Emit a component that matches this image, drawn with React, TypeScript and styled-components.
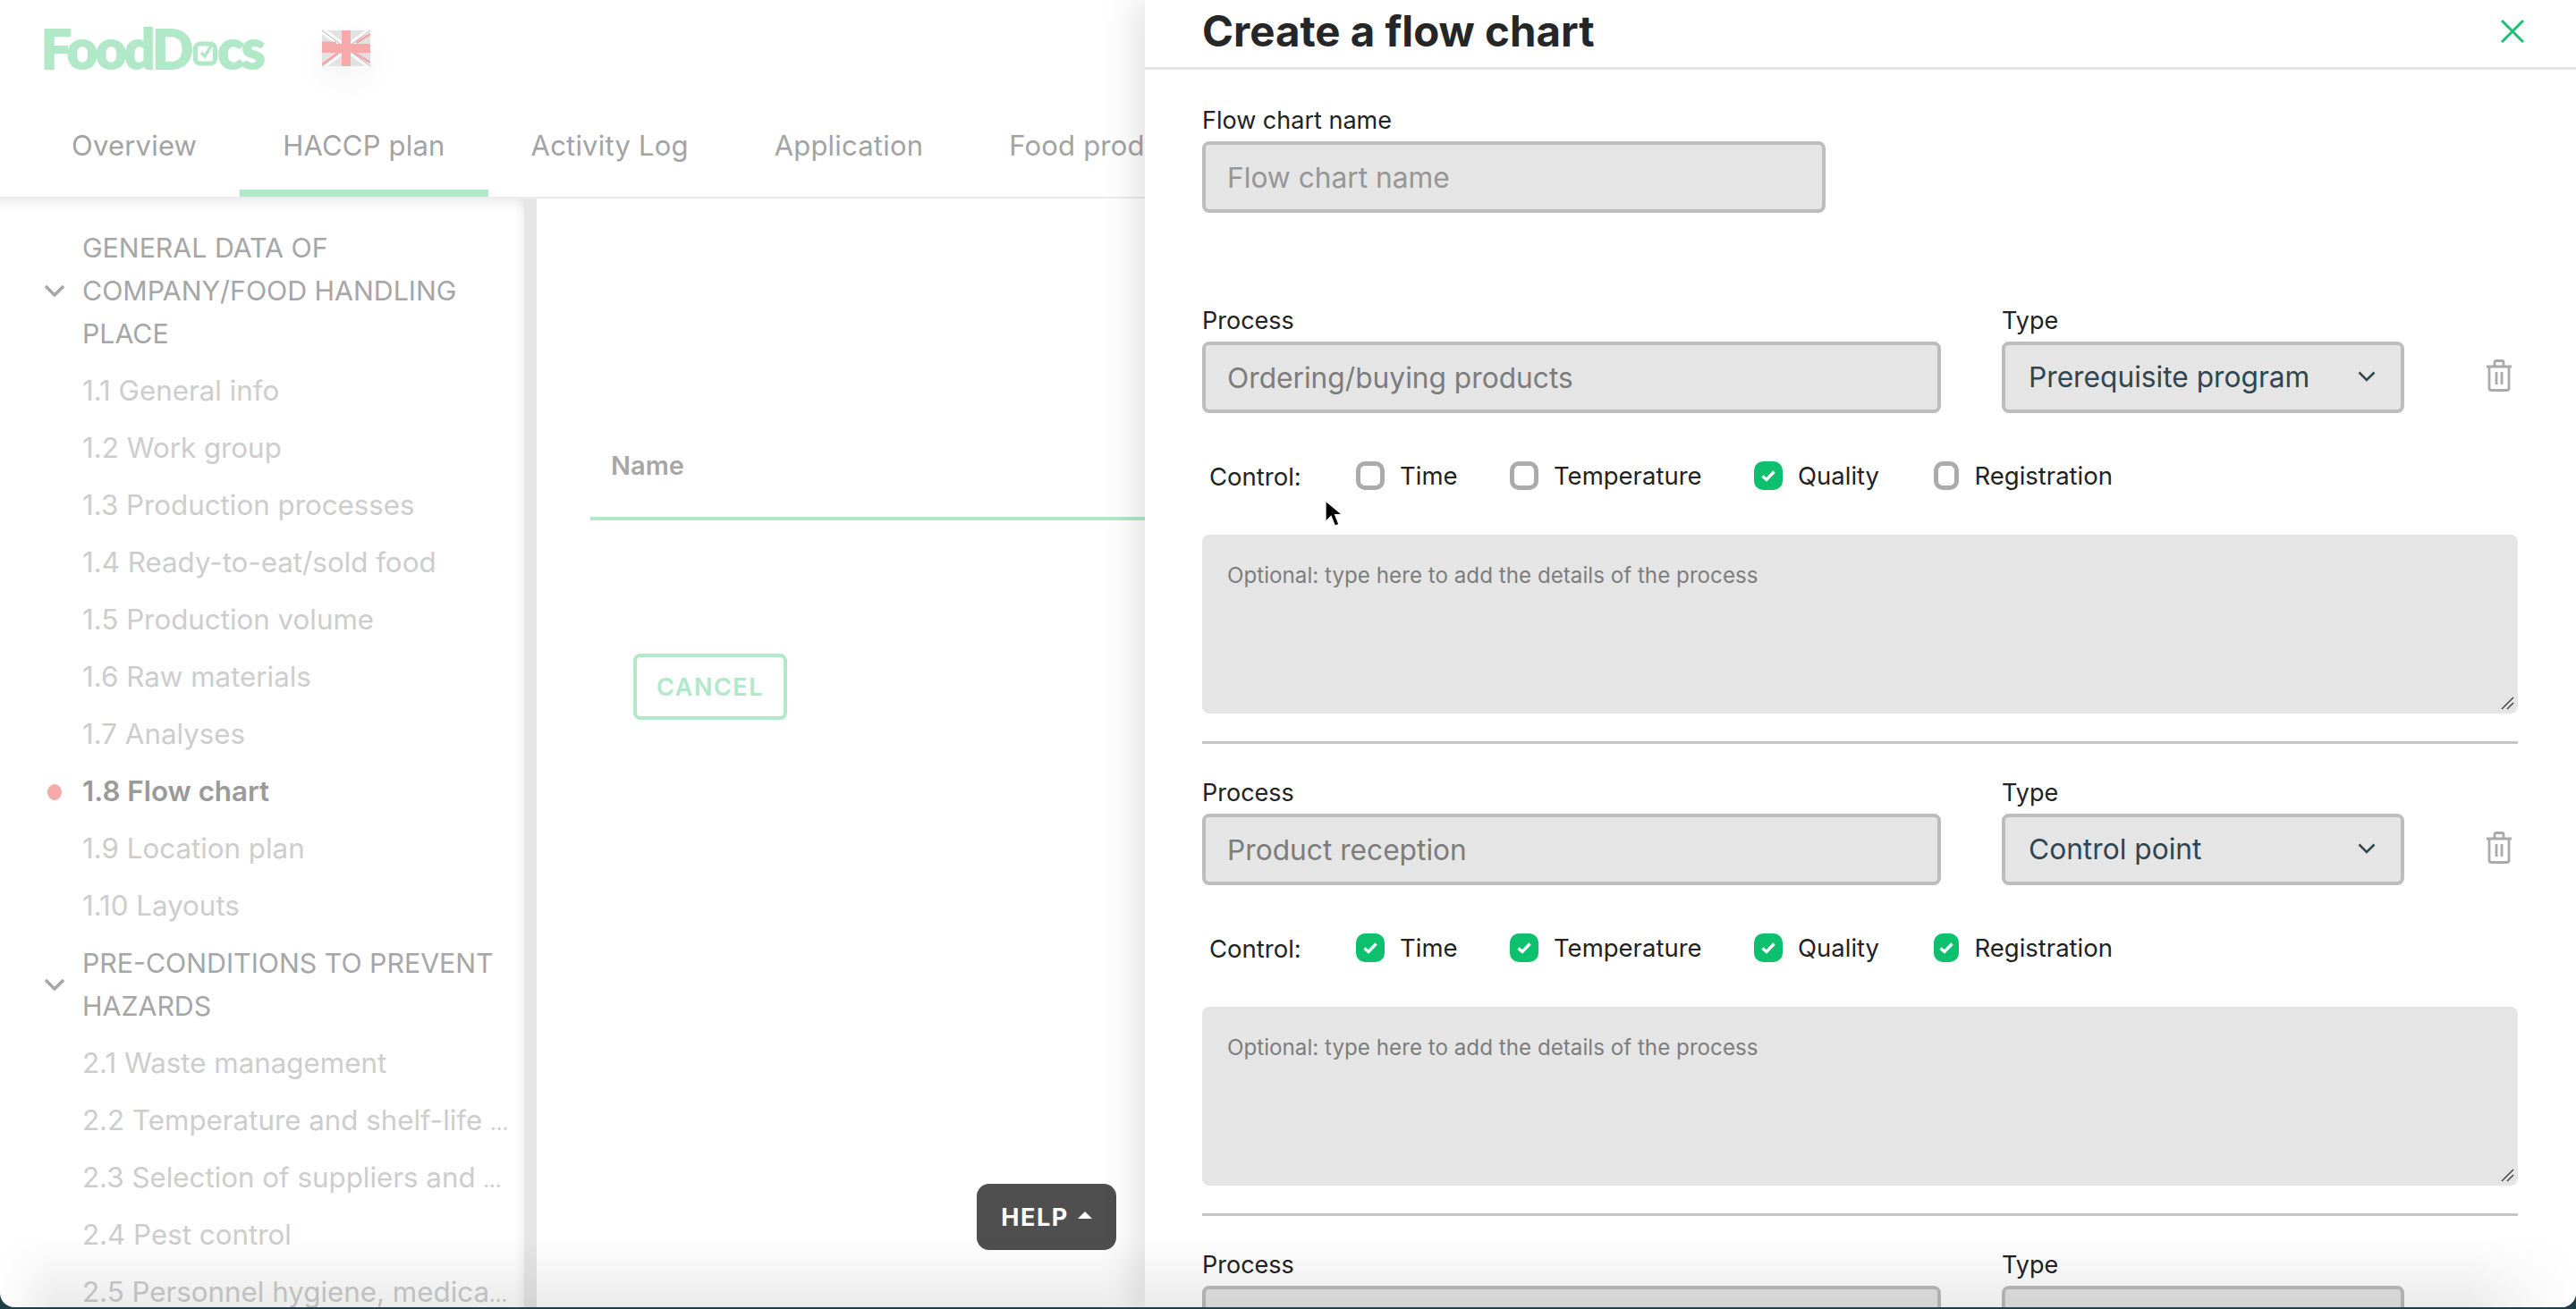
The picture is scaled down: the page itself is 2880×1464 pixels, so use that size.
import styled, { createGlobalStyle } from 'styled-components';

const GlobalStyle = createGlobalStyle`
  html, body {
    margin: 0;
    padding: 0;
    background: #1f3f48;
  }
  * {
    box-sizing: border-box;
  }
`;

const font = `Inter, "Liberation Sans", sans-serif`;

const Screen = styled.div`
  position: relative;
  display: flex;
  width: 2880px;
  height: 1462px;
  overflow: hidden;
  background: #fff;
  border-radius: 0 0 16px 16px;
  font-family: ${font};
`;

const Page = styled.div`
  position: relative;
  display: flex;
  flex-direction: column;
  width: 1280px;
  flex: none;
`;

const TopBar = styled.div`
  display: flex;
  align-items: flex-start;
  height: 118px;
  padding: 26px 0 0 46px;
`;

const Logo = styled.div`
  display: flex;
  align-items: center;
  width: 314px;
  height: 56px;
  font-family: Lato, sans-serif;
  font-weight: 900;
  font-size: 60px;
  letter-spacing: -2.5px;
  color: #b0e8c8;
  -webkit-text-stroke: 2px #b0e8c8;
`;

const LogoBox = styled.svg`
  width: 27px;
  height: 30px;
  margin: 9px 1px 0 2px;
`;

const FlagWrap = styled.div`
  display: flex;
  align-items: center;
  justify-content: center;
  width: 54px;
  height: 40px;
  margin-top: 8px;
  border-radius: 50%;
  box-shadow: 0 14px 30px 6px rgba(0, 0, 0, 0.04);
`;

const Tabs = styled.div`
  display: flex;
  height: 104px;
  padding-left: 32px;
  border-bottom: 2px solid #ececec;
  white-space: nowrap;
  overflow: hidden;
`;

const Tab = styled.div<{ $active?: boolean }>`
  display: flex;
  align-items: center;
  height: 102px;
  padding: 0 48px 6px;
  font-size: 31px;
  letter-spacing: 0.2px;
  color: #a3a3a3;
  border-bottom: 8px solid ${({ $active }) => ($active ? '#b0e8c8' : 'transparent')};
`;

const Main = styled.div`
  display: flex;
  flex: 1;
  min-height: 0;
`;

const Sidebar = styled.div`
  width: 600px;
  flex: none;
  padding-top: 23px;
  overflow: hidden;
  border-right: 14px solid #e6e6e6;
  box-shadow: inset -12px 0 12px -10px rgba(0, 0, 0, 0.08), inset 0 16px 14px -12px rgba(0, 0, 0, 0.09);
`;

const Section = styled.div`
  display: flex;
  align-items: center;
  padding: 0 24px 0 48px;
  margin: 8px 0;
  font-size: 30.3px;
  line-height: 48px;
  color: #a6a6a6;
`;

const SectionIcon = styled.svg`
  width: 26px;
  height: 16px;
  flex: none;
  margin-right: 18px;
`;

const Item = styled.div<{ $active?: boolean }>`
  position: relative;
  height: 64px;
  padding-left: 92px;
  font-size: 31.3px;
  font-weight: ${({ $active }) => ($active ? 600 : 400)};
  line-height: 64px;
  white-space: nowrap;
  color: ${({ $active }) => ($active ? '#9a9a9a' : '#cdcdcd')};
`;

// the cut-off mark of a long item is smaller than its text
const Dots = styled.span`
  font-size: 21px;
  font-weight: 600;
`;

const Dot = styled.span`
  position: absolute;
  left: 53px;
  top: 24px;
  width: 16px;
  height: 18px;
  border-radius: 50%;
  background: #f5a9a9;
`;

const Content = styled.div`
  flex: 1;
  padding: 260px 0 0 60px;
`;

const NameHead = styled.div`
  height: 100px;
  padding: 21px 0 0 23px;
  border-bottom: 4px solid #b0e8c8;
  font-size: 29px;
  font-weight: 600;
  line-height: 36px;
  color: #a6a6a6;
`;

const CancelButton = styled.button`
  display: block;
  width: 172px;
  height: 74px;
  margin: 149px 0 0 48px;
  background: #fff;
  border: 4px solid #b0e8c8;
  border-radius: 8px;
  font-family: ${font};
  font-size: 27px;
  font-weight: 600;
  letter-spacing: 1.5px;
  color: #b0e8c8;
`;

const HelpButton = styled.div`
  position: absolute;
  left: 1092px;
  bottom: 64px;
  display: flex;
  align-items: center;
  justify-content: center;
  gap: 10px;
  width: 156px;
  height: 74px;
  background: #4f4f4f;
  border-radius: 14px;
  font-size: 27px;
  font-weight: 700;
  letter-spacing: 1.5px;
  color: #fff;
`;

const Caret = styled.span`
  width: 0;
  height: 0;
  margin-bottom: 4px;
  border-left: 8px solid transparent;
  border-right: 8px solid transparent;
  border-bottom: 8px solid #fff;
`;

const Drawer = styled.div`
  position: relative;
  flex: 1;
  background: #fff;
  box-shadow: -14px 0 34px rgba(0, 0, 0, 0.1);
`;

const DrawerHead = styled.div`
  display: flex;
  align-items: center;
  justify-content: space-between;
  height: 78px;
  padding: 0 58px 6px 64px;
  border-bottom: 3px solid #e6e6e6;
`;

const Title = styled.h1`
  margin: 0;
  font-size: 47.4px;
  font-weight: 700;
  color: #262626;
`;

const DrawerBody = styled.div`
  padding: 40px 65px 0 64px;
`;

const Label = styled.div`
  height: 34px;
  margin-bottom: 6px;
  font-size: 27px;
  line-height: 34px;
  color: #222;
`;

const TextField = styled.input`
  display: block;
  height: 80px;
  width: 100%;
  padding: 0 24px;
  background: #e5e5e5;
  border: 4px solid #bdbdbd;
  border-radius: 8px;
  outline: none;
  font-family: ${font};
  font-size: 31.7px;
  color: #7c7c7c;

  &::placeholder {
    color: #969696;
    opacity: 1;
  }
`;

const NameField = styled.div`
  width: 697px;
  margin-bottom: 104px;
`;

const ProcessBlock = styled.div`
  padding-bottom: 31px;
  margin-bottom: 38px;
  border-bottom: 3px solid #c6c6c6;
`;

const ProcessRow = styled.div`
  display: grid;
  grid-template-columns: 826px 450px 1fr;
  column-gap: 68px;
`;

const SelectBox = styled.div`
  display: flex;
  align-items: center;
  justify-content: space-between;
  height: 80px;
  padding: 0 28px 2px 26px;
  background: #e5e5e5;
  border: 4px solid #bdbdbd;
  border-radius: 8px;
  font-size: 31.7px;
  color: #2f4650;
`;

const TrashIcon = styled.svg`
  width: 30px;
  height: 36px;
  margin: 60px 0 0 23px;
`;

const ControlRow = styled.div`
  display: flex;
  align-items: center;
  height: 32px;
  margin: 54px 0 50px 8px;
  font-size: 27.5px;
  color: #222;
`;

const ControlLabel = styled.span`
  width: 164px;
  padding-top: 2px;
`;

const Option = styled.span<{ $width: number }>`
  display: flex;
  align-items: center;
  gap: 17px;
  width: ${({ $width }) => $width}px;
`;

const Checkbox = styled.span<{ $checked: boolean }>`
  display: flex;
  align-items: center;
  justify-content: center;
  width: 32px;
  height: 32px;
  border-radius: 10px;
  background: ${({ $checked }) => ($checked ? '#0cc06e' : '#fff')};
  border: ${({ $checked }) => ($checked ? 'none' : '5px solid #ababab')};
`;

const NotesWrap = styled.div`
  position: relative;
  height: 200px;
`;

const Notes = styled.textarea`
  display: block;
  width: 100%;
  height: 100%;
  padding: 32px 28px;
  background: #e5e5e5;
  border: none;
  border-radius: 8px;
  outline: none;
  resize: none;
  font-family: ${font};
  font-size: 24.2px;
  line-height: 28px;

  &::placeholder {
    color: #7d7d7d;
    opacity: 1;
  }
`;

const ResizeHandle = styled.svg`
  position: absolute;
  right: 4px;
  bottom: 4px;
  width: 16px;
  height: 16px;
`;

// fade at the bottom edge of the window
const BottomShade = styled.div`
  position: absolute;
  left: 0;
  right: 0;
  bottom: 0;
  height: 80px;
  pointer-events: none;
  background: linear-gradient(to bottom, rgba(0, 0, 0, 0), rgba(0, 0, 0, 0.08));
  mask-image: linear-gradient(to right, transparent 0, #000 60px, #000 calc(100% - 120px), transparent 100%);
`;

const Pointer = styled.svg`
  position: absolute;
  left: 1476px;
  top: 557px;
  width: 26px;
  height: 36px;
`;

const general = ['1.1 General info', '1.2 Work group', '1.3 Production processes', '1.4 Ready-to-eat/sold food', '1.5 Production volume', '1.6 Raw materials', '1.7 Analyses'];
const general2 = ['1.9 Location plan', '1.10 Layouts'];
const hazards = [
  { label: '2.1 Waste management' },
  { label: '2.2 Temperature and shelf-life ', cut: true },
  { label: '2.3 Selection of suppliers and ', cut: true },
  { label: '2.4 Pest control' },
  { label: '2.5 Personnel hygiene, medica', cut: true },
];

const controls = [
  { name: 'Time', width: 172 },
  { name: 'Temperature', width: 273 },
  { name: 'Quality', width: 201 },
  { name: 'Registration', width: 200 },
];

const processes = [
  { name: 'Ordering/buying products', type: 'Prerequisite program', checked: ['Quality'] },
  { name: 'Product reception', type: 'Control point', checked: ['Time', 'Temperature', 'Quality', 'Registration'] },
];

function Chevron() {
  return (
    <SectionIcon viewBox="0 0 26 16">
      <path d="M3 3l10 10L23 3" fill="none" stroke="#a6a6a6" strokeWidth="3.5" />
    </SectionIcon>
  );
}

function UkFlag() {
  return (
    <svg width="54" height="40" viewBox="0 0 54 40">
      <rect width="54" height="40" fill="#e2e2e2" />
      <path d="M0 0l54 40M54 0L0 40" stroke="#fff" strokeWidth="7" />
      <path d="M0 0l54 40M54 0L0 40" stroke="#b0b0b0" strokeWidth="1" />
      <path d="M0 14L16 14 M54 4L38 14 M0 38L18 25 M54 36L36 25" stroke="#f5a9a9" strokeWidth="3" />
      <path d="M27 0v40M0 20h54" stroke="#f5a9a9" strokeWidth="10" />
    </svg>
  );
}

function ProcessFields({ name, type, checked }: { name: string; type: string; checked: string[] }) {
  return (
    <ProcessBlock>
      <ProcessRow>
        <div>
          <Label>Process</Label>
          <TextField readOnly value={name} />
        </div>
        <div>
          <Label>Type</Label>
          <SelectBox>
            {type}
            <svg width="20" height="12" viewBox="0 0 20 12">
              <path d="M1.5 1.5L10 10l8.5-8.5" fill="none" stroke="#2f4650" strokeWidth="2.6" />
            </svg>
          </SelectBox>
        </div>
        <TrashIcon viewBox="0 0 30 36">
          <path
            d="M1 8h28M10 8V3.5Q10 1.500 12 1.500h6Q20 1.500 20 3.500V8M4 8v24q0 2.500 2.500 2.500h17q2.500 0 2.500-2.500V8M12 14v14M18 14v14"
            fill="none"
            stroke="#aaaaaa"
            strokeWidth="2.800"
          />
        </TrashIcon>
      </ProcessRow>
      <ControlRow>
        <ControlLabel>Control:</ControlLabel>
        {controls.map((control) => {
          const isChecked = checked.includes(control.name);
          return (
            <Option key={control.name} $width={control.width}>
              <Checkbox $checked={isChecked}>
                {isChecked && (
                  <svg width="18" height="14" viewBox="0 0 18 14">
                    <path d="M2.500 7.500l4.500 4L15.500 2.500" fill="none" stroke="#fff" strokeWidth="3.400" />
                  </svg>
                )}
              </Checkbox>
              {control.name}
            </Option>
          );
        })}
      </ControlRow>
      <NotesWrap>
        <Notes readOnly placeholder="Optional: type here to add the details of the process" />
        <ResizeHandle viewBox="0 0 16 16">
          <path d="M2 15L15 2M8 15l7-7" stroke="#444" strokeWidth="1.500" />
        </ResizeHandle>
      </NotesWrap>
    </ProcessBlock>
  );
}

export default function App() {
  return (
    <>
      <GlobalStyle />
      <Screen>
        <Page>
          <TopBar>
            <Logo>
              FoodD
              <LogoBox viewBox="0 0 27 30">
                <rect x="2.500" y="5" width="22" height="22" rx="5" fill="none" stroke="#b0e8c8" strokeWidth="5" />
                <path d="M9 15l4 4 9-15" fill="none" stroke="#b0e8c8" strokeWidth="3.500" />
              </LogoBox>
              cs
            </Logo>
            <FlagWrap>
              <UkFlag />
            </FlagWrap>
          </TopBar>
          <Tabs>
            <Tab>Overview</Tab>
            <Tab $active>HACCP plan</Tab>
            <Tab>Activity Log</Tab>
            <Tab>Application</Tab>
            <Tab>Food products</Tab>
          </Tabs>
          <Main>
            <Sidebar>
              <Section>
                <Chevron />
                <div>
                  GENERAL DATA OF
                  <br />
                  COMPANY/FOOD HANDLING
                  <br />
                  PLACE
                </div>
              </Section>
              {general.map((item) => (
                <Item key={item}>{item}</Item>
              ))}
              <Item $active>
                <Dot />
                1.8 Flow chart
              </Item>
              {general2.map((item) => (
                <Item key={item}>{item}</Item>
              ))}
              <Section>
                <Chevron />
                <div>
                  PRE-CONDITIONS TO PREVENT
                  <br />
                  HAZARDS
                </div>
              </Section>
              {hazards.map((item) => (
                <Item key={item.label}>
                  {item.label}
                  {item.cut && <Dots>...</Dots>}
                </Item>
              ))}
            </Sidebar>
            <Content>
              <NameHead>Name</NameHead>
              <CancelButton>CANCEL</CancelButton>
            </Content>
          </Main>
          <HelpButton>
            HELP
            <Caret />
          </HelpButton>
        </Page>
        <Drawer>
          <DrawerHead>
            <Title>Create a flow chart</Title>
            <svg width="26" height="26" viewBox="0 0 26 26">
              <path d="M1 1l24 24M25 1L1 25" stroke="#1fbf73" strokeWidth="3" />
            </svg>
          </DrawerHead>
          <DrawerBody>
            <NameField>
              <Label>Flow chart name</Label>
              <TextField readOnly placeholder="Flow chart name" />
            </NameField>
            {processes.map((process) => (
              <ProcessFields key={process.name} {...process} />
            ))}
            <ProcessRow>
              <div>
                <Label>Process</Label>
                <TextField readOnly />
              </div>
              <div>
                <Label>Type</Label>
                <SelectBox />
              </div>
            </ProcessRow>
          </DrawerBody>
        </Drawer>
        <BottomShade />
        <Pointer viewBox="0 0 24 34">
          <path d="M5 2v24l6-6 4 10 5-2-4-10h8z" fill="#000" stroke="#fff" strokeWidth="2" />
        </Pointer>
      </Screen>
    </>
  );
}
